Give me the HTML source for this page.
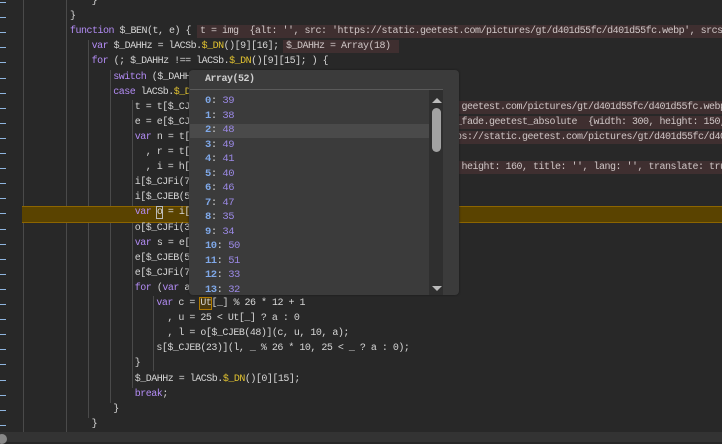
<!DOCTYPE html>
<html><head><meta charset="utf-8"><style>
html,body{margin:0;padding:0}
body{width:722px;height:442px;background:#282828;position:relative;overflow:hidden;font-family:"Liberation Mono",monospace;font-size:10px;letter-spacing:-0.5px;color:#d6d6d6}
.l{position:absolute;height:15px;line-height:15px;white-space:pre}
.d{position:absolute;left:0;width:6px;height:1px;background:#8fb6e0}
.k{color:#b38cf5}.y{color:#e2c330}
.g{position:absolute;width:1px;background:#4a4a4a}
.a{position:absolute;height:13px;line-height:13px;background:#3f2f30;color:#cfc6c6;white-space:pre;padding:0 3px}
.pop{position:absolute;left:189px;top:70px;width:270px;height:225px;background:#3b3b3b;border-radius:4px;box-shadow:0 0 2px #1a1a1a}
.r{position:absolute;left:16px;height:14px;line-height:14px;font-size:10.5px}
.r b{color:#7fa8e8}.r span{color:#9b89e6}
</style></head><body>
<div class="g" style="left:23px;top:0;height:432px"></div>
<div class="g" style="left:66px;top:0;height:432px"></div>
<div class="g" style="left:88px;top:40px;height:378px"></div>
<div class="g" style="left:110px;top:70px;height:333px"></div>
<div class="g" style="left:132px;top:100px;height:288px"></div>
<div class="g" style="left:153px;top:296px;height:75px"></div>
<div style="position:absolute;left:22px;top:206px;width:700px;height:15px;background:#5a4300;border-top:1px solid #8c6500;border-bottom:1px solid #8c6500"></div>
<div id="c"></div>
<div class="a" style="left:197px;top:25px;width:520px">t = img  {alt: '', src: 'https://static.geetest.com/pictures/gt/d401d55fc/d401d55fc.webp', srcset</div>
<div class="a" style="left:283px;top:40px">$_DAHHz = Array(18) </div>
<div class="a" style="left:456px;top:101px;width:266px;padding:0"> geetest.com/pictures/gt/d401d55fc/d401d55fc.webp'</div>
<div class="a" style="left:456px;top:116px;width:266px;padding:0">_fade.geetest_absolute  {width: 300, height: 150,</div>
<div class="a" style="left:456px;top:131px;width:266px;padding:0">ps://static.geetest.com/pictures/gt/d401d55fc/d40</div>
<div class="a" style="left:456px;top:161px;width:266px;padding:0"> height: 160, title: '', lang: '', translate: true</div>
<div class="pop">
<div style="position:absolute;left:16px;top:4px;font-weight:bold;color:#cfcfcf;font-size:10px">Array(52)</div>
<div style="position:absolute;left:1px;top:19px;width:253px;height:1px;background:#5a5a5a"></div>
<div style="position:absolute;left:1px;top:54px;width:239px;height:14px;background:#4a4a4a"></div>
<div style="position:absolute;left:240px;top:20px;width:14px;height:205px;background:#2f2f2f"></div>
<div style="position:absolute;left:243px;top:38px;width:9px;height:44px;background:#a3a3a3;border-radius:5px"></div>
<div style="position:absolute;left:243px;top:28px;width:0;height:0;border-left:5px solid transparent;border-right:5px solid transparent;border-bottom:5px solid #bbb"></div>
<div style="position:absolute;left:243px;top:216px;width:0;height:0;border-left:5px solid transparent;border-right:5px solid transparent;border-top:5px solid #bbb"></div>
<div id="rows"></div>
</div>
<div style="position:absolute;left:0;top:432px;width:722px;height:10px;background:#333"></div>
<div style="position:absolute;left:-3px;top:434px;width:10px;height:10px;border-radius:5px;background:#888"></div>
<script>
var L=[[3,'}'],[2,'}'],[2,'<i class=k>function</i> $_BEN(t, e) {'],[3,'<i class=k>var</i> $_DAHHz = lACSb.<i class=y>$_DN</i>()[9][16];'],[3,'<i class=k>for</i> (; $_DAHHz !== lACSb.<i class=y>$_DN</i>()[9][15]; ) {'],[4,'<i class=k>switch</i> ($_DAHHz'],[4,'<i class=k>case</i> lACSb.<i class=y>$_DN</i>'],[5,'t = t[$_CJE'],[5,'e = e[$_CJE'],[5,'<i class=k>var</i> n = t[$'],[5,'  , r = t[$'],[5,'  , i = h[$'],[5,'i[$_CJFi(73'],[5,'i[$_CJEB(53'],[5,'<i class=k>var</i> <span style="outline:1px solid #bbb">o</span> = i[$'],[5,'o[$_CJFi(34'],[5,'<i class=k>var</i> s = e[$'],[5,'e[$_CJEB(53'],[5,'e[$_CJFi(73'],[5,'<i class=k>for</i> (<i class=k>var</i> a'],[6,'<i class=k>var</i> c = <span style="outline:1px solid #b07a00;background:#4a3a10">Ut</span>[_] % 26 * 12 + 1'],[6,'  , u = 25 &lt; Ut[_] ? a : 0'],[6,'  , l = o[$_CJEB(48)](c, u, 10, a);'],[6,'s[$_CJEB(23)](l, _ % 26 * 10, 25 &lt; _ ? a : 0);'],[5,'}'],[5,'$_DAHHz = lACSb.<i class=y>$_DN</i>()[0][15];'],[5,'<i class=k>break</i>;'],[4,'}'],[3,'}']];
var h='';
for(var n=0;n<L.length;n++){var cy=2+15.1*n;h+='<div class=d style="top:'+Math.round(cy)+'px"></div><div class=l style="top:'+(cy-8).toFixed(1)+'px;left:'+(70+(L[n][0]-2)*21.6).toFixed(1)+'px">'+L[n][1].replace(/<i /g,'<span ').replace(/<\/i>/g,'</span>')+'</div>';}
document.getElementById('c').innerHTML=h;
var v=[39,38,48,49,41,40,46,47,35,34,50,51,33,32],r='';
for(var k=0;k<14;k++){r+='<div class=r style="top:'+(24+14.5*k).toFixed(1)+'px"><b>'+k+'</b>: <span>'+v[k]+'</span></div>';}
document.getElementById('rows').innerHTML=r;
</script>
</body></html>
